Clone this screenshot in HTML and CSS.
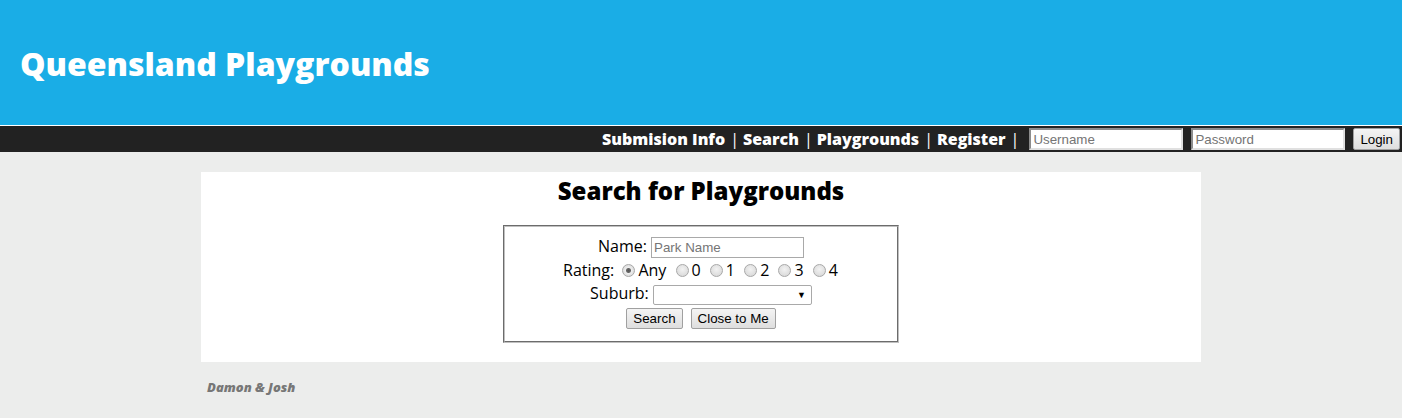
FILE: index.html
```html
<!DOCTYPE html>
<html>
<head>
<meta charset="utf-8">
<link rel="stylesheet" href="styles.css">
</head>
<body>
<header class="banner">
  <h1 class="site-title">Queensland Playgrounds</h1>
</header>
<nav class="navbar">
  <a href="#">Submision Info</a><span class="sep">|</span>
  <a href="#">Search</a><span class="sep">|</span>
  <a href="#">Playgrounds</a><span class="sep">|</span>
  <a href="#">Register</a><span class="sep">|</span>
  <input class="nav-input" type="text" placeholder="Username">
  <input class="nav-input" type="password" placeholder="Password">
  <button class="btn login-btn">Login</button>
</nav>
<main class="content">
  <h2 class="page-title">Search for Playgrounds</h2>
  <fieldset class="search-box">
    <div class="row">Name: <input class="text-input" type="text" placeholder="Park Name"></div>
    <div class="row">Rating:
      <label><input type="radio" name="r" checked>Any</label>
      <label><input type="radio" name="r">0</label>
      <label><input type="radio" name="r">1</label>
      <label><input type="radio" name="r">2</label>
      <label><input type="radio" name="r">3</label>
      <label><input type="radio" name="r">4</label>
    </div>
    <div class="row">Suburb: <span class="suburb"><span class="arrow">&#9660;</span></span></div>
    <div class="row buttons"><button class="btn">Search</button><button class="btn">Close to Me</button></div>
  </fieldset>
</main>
<footer class="footer">Damon &amp; Josh</footer>
</body>
</html>
```
FILE: styles.css
```css
html, body {
  margin: 0;
  padding: 0;
}
body {
  background: #ecedec;
  font-family: "Open Sans", sans-serif;
}
.banner {
  background: #1aade6;
  height: 125px;
  border-bottom: 1px solid #ffffff;
  display: flex;
  align-items: center;
}
.site-title {
  margin: 0 0 0 20px;
  color: #fff;
  font-size: 32px;
  font-weight: 800;
  position: relative;
  top: 1px;
}
.navbar {
  background: #222222;
  height: 26px;
  display: flex;
  justify-content: flex-end;
  align-items: center;
  padding-right: 2px;
  color: #fff;
}
.navbar a {
  color: #fff;
  text-decoration: none;
  font-weight: 800;
  font-size: 16px;
}
.sep {
  margin: 0 4px 0 5px;
  font-size: 16px;
  font-weight: 400;
  color: #ffffff;
}
.nav-input {
  width: 154px;
  height: 22px;
  box-sizing: border-box;
  padding: 1px 2px;
  border: 2px inset #e0e0e0;
  border-style: inset;
  font-family: Arial, "Liberation Sans", sans-serif;
  font-size: 13.33px;
  margin: 0 4px 0 6px;
}
.nav-input + .nav-input {
  margin-left: 4px;
  margin-right: 8px;
}
.btn {
  font-family: Arial, "Liberation Sans", sans-serif;
  font-size: 13.33px;
  background: linear-gradient(#f4f4f4, #dedede);
  border: 1px solid #a0a0a0;
  border-radius: 2px;
  padding: 2px 6px;
  color: #000;
}
.login-btn {
  height: 22px;
  padding: 1px 6px;
}
.content {
  background: #fff;
  width: 1000px;
  margin: 20px auto 0;
  padding: 1px 0 19px;
  box-sizing: border-box;
  text-align: center;
}
.page-title {
  margin: 1px 0 18px;
  font-size: 24px;
  font-weight: 800;
  color: #000;
}
.search-box {
  width: 396px;
  box-sizing: border-box;
  margin: 0 auto;
  padding: 8px 10px 12px;
  border: 2px groove #c0c0c0;
  font-size: 16px;
  color: #000;
}
.row {
  line-height: 23.5px;
  height: 23.5px;
}
.row label {
  margin-right: 1px;
}
.row input[type=radio] {
  appearance: none;
  -webkit-appearance: none;
  width: 13px;
  height: 13px;
  border-radius: 50%;
  border: 1px solid #a8a8a8;
  background: radial-gradient(circle at 50% 40%, #f2f2f2, #d4d4d4);
  margin: 0 3px 0 4px;
  vertical-align: -1px;
  box-sizing: border-box;
}
.row input[type=radio]:checked {
  background: radial-gradient(circle, #555 0, #666 2px, #eee 3px, #d0d0d0 100%);
}
.text-input {
  width: 153px;
  height: 21px;
  box-sizing: border-box;
  padding: 1px 2px;
  font-family: Arial, "Liberation Sans", sans-serif;
  font-size: 13.33px;
  border: 1px solid #a9a9a9;
  vertical-align: middle;
}
.suburb {
  display: inline-flex;
  justify-content: flex-end;
  align-items: center;
  width: 159px;
  height: 20px;
  box-sizing: border-box;
  border: 1px solid #a9a9a9;
  border-radius: 2px;
  background: #fff;
  vertical-align: middle;
  padding-right: 5px;
}
.arrow {
  font-size: 9px;
  line-height: 1;
  color: #000;
}
.buttons {
  margin-top: 2px;
  display: flex;
  justify-content: center;
  gap: 8px;
  line-height: normal;
  height: auto;
}
.footer {
  width: 1000px;
  margin: 16px auto 0;
  padding-left: 6px;
  box-sizing: border-box;
  color: #777;
  font-size: 13px;
  font-weight: 800;
  font-style: italic;
}
```
